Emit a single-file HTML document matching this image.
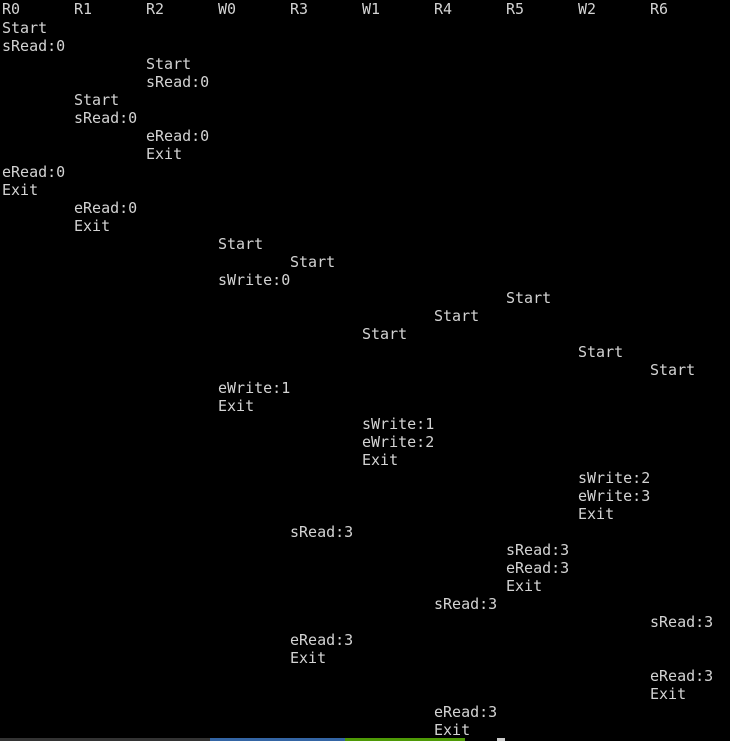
<!DOCTYPE html>
<html><head><style>
html,body{margin:0;padding:0;background:#000;width:730px;height:741px;overflow:hidden;position:relative}
.l{position:absolute;left:2px;height:18px;line-height:18px;font-family:"DejaVu Sans Mono","Liberation Mono",monospace;font-size:15px;color:#d3d3d3;white-space:pre}
.b{position:absolute;top:738px;height:3px}
</style></head><body>
<div id="c"></div>
<div class="b" style="left:0;width:210px;background:#333"></div>
<div class="b" style="left:210px;width:135px;background:#3465a4"></div>
<div class="b" style="left:345px;width:120px;background:#4e9a06"></div>
<div class="b" style="left:497px;width:8px;background:#ccc"></div>
<script>
var h=["R0","R1","R2","W0","R3","W1","R4","R5","W2","R6"];
var rows=[[0,"Start"],[0,"sRead:0"],[2,"Start"],[2,"sRead:0"],[1,"Start"],[1,"sRead:0"],[2,"eRead:0"],[2,"Exit"],[0,"eRead:0"],[0,"Exit"],[1,"eRead:0"],[1,"Exit"],[3,"Start"],[4,"Start"],[3,"sWrite:0"],[7,"Start"],[6,"Start"],[5,"Start"],[8,"Start"],[9,"Start"],[3,"eWrite:1"],[3,"Exit"],[5,"sWrite:1"],[5,"eWrite:2"],[5,"Exit"],[8,"sWrite:2"],[8,"eWrite:3"],[8,"Exit"],[4,"sRead:3"],[7,"sRead:3"],[7,"eRead:3"],[7,"Exit"],[6,"sRead:3"],[9,"sRead:3"],[4,"eRead:3"],[4,"Exit"],[9,"eRead:3"],[9,"Exit"],[6,"eRead:3"],[6,"Exit"]];
var s="";
h.forEach(function(t,i){s+='<div class="l" style="top:0px;left:'+(2+72*i)+'px">'+t+'</div>';});
rows.forEach(function(r,i){s+='<div class="l" style="top:'+(18*(i+1)+1)+'px;left:'+(2+72*r[0])+'px">'+r[1]+'</div>';});
document.getElementById("c").innerHTML=s;
</script>
</body></html>
